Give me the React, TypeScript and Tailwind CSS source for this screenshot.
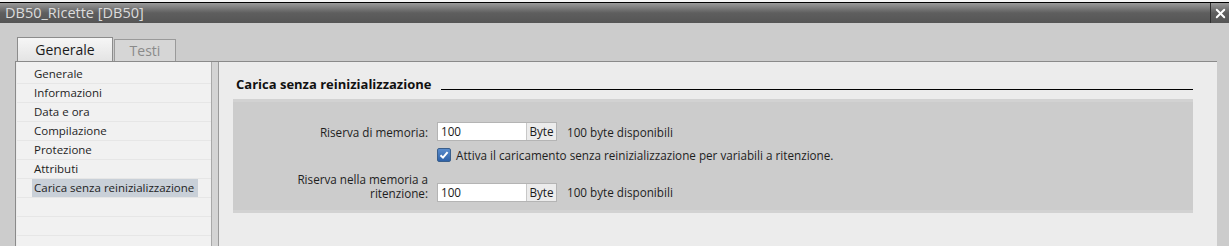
import { X } from "lucide-react"

const navItems = [
  "Generale",
  "Informazioni",
  "Data e ora",
  "Compilazione",
  "Protezione",
  "Attributi",
  "Carica senza reinizializzazione",
]

function ByteField({ value }: { value: string }) {
  return (
    <div className="flex h-[19px] w-[120px] border border-[#b4b4b4] bg-white text-[11.7px] leading-[17px] text-[#1a1a1a]">
      <span className="flex-1 pl-[3px]">{value}</span>
      <span className="w-[30px] border-l border-[#c8c8c8] bg-[#ececec] text-center">Byte</span>
    </div>
  )
}

export default function App() {
  return (
    <div
      className="flex h-[246px] w-[1229px] flex-col overflow-hidden bg-[#cccccc] text-[#1e1e1e]"
      style={{ fontFamily: '"Open Sans", "Noto Sans", sans-serif' }}
    >
      {/* strip of the window above */}
      <div className="h-[3px] shrink-0 border-b border-black bg-[#f4f4f4]" />

      {/* title bar */}
      <div className="flex h-[20px] shrink-0 items-center bg-gradient-to-b from-[#9a9a9a] via-[#5e5e5e] to-[#555555]">
        <span className="flex-1 pl-[5px] text-[14.5px] leading-[18px] text-[#dcdcdc]">DB50_Ricette [DB50]</span>
        <div className="flex h-full w-[19px] items-center justify-center border-l border-[#2e2e2e]">
          <X size={15} strokeWidth={3} className="text-white" />
        </div>
      </div>

      <div className="flex min-h-0 flex-1 flex-col pl-[15px] pr-[12px]">
        {/* tabs */}
        <div className="mt-[14px] flex h-[24px] shrink-0 items-end pl-[2px]">
          <div className="flex h-[24px] w-[96px] items-center justify-center border border-b-0 border-[#8c8c8c] bg-gradient-to-b from-[#f6f6f6] to-[#e4e4e4] text-[14px] font-medium text-[#1a1a1a]">
            Generale
          </div>
          <div className="ml-[1px] flex h-[22px] w-[62px] items-center justify-center border border-b-0 border-[#9a9a9a] bg-[#d6d6d6] text-[14px] font-medium text-[#8a8a8a]">
            Testi
          </div>
        </div>

        {/* panel */}
        <div className="flex min-h-0 flex-1 overflow-hidden border-l border-t border-[#8a8a8a] bg-[#ececec]">
          {/* left navigation */}
          <div className="ml-[1px] w-[195px] shrink-0 border-r border-[#a8a8a8] bg-[#f1f1f1] pt-[3px]">
            {navItems.map((item, i) => (
              <div key={item} className="border-b border-[#e6e6e6] pl-[15px]">
                <div
                  className={`h-[18px] w-[166px] pl-[2px] text-[11.5px] leading-[18px] ${
                    i === navItems.length - 1 ? "bg-[#c9d0d8]" : ""
                  }`}
                >
                  {item}
                </div>
              </div>
            ))}
            {[0, 1, 2].map((n) => (
              <div key={n} className="h-[19px] border-b border-[#e6e6e6]" />
            ))}
          </div>

          {/* splitter */}
          <div className="w-[7px] shrink-0 border-r border-[#9a9a9a] bg-[#d4d4d4]" />

          {/* content */}
          <div className="flex-1 pl-[14px] pr-[24px] pt-[13px]">
            <div className="flex items-center pl-[3px]">
              <span className="text-[13px] font-bold leading-[18px] text-[#111]">Carica senza reinizializzazione</span>
              <div className="ml-[10px] mt-[10px] h-px flex-1 bg-black" />
            </div>

            <div className="mt-[6px] h-[114px] border-y-[3px] border-[#d2d2d2] bg-[#cccccc] pt-[20px] text-[11.7px] leading-[16px]">
              <div className="flex items-center">
                <span className="w-[204px] pr-[9px] text-right">Riserva di memoria:</span>
                <ByteField value="100" />
                <span className="ml-[10px]">100 byte disponibili</span>
              </div>

              <div className="mt-[6px] flex items-center pl-[204px]">
                <div className="flex h-[14px] w-[14px] items-center justify-center rounded-[2px] border border-[#3a5f8c] bg-gradient-to-b from-[#5a8ccc] to-[#2e62a8]">
                  <svg width="10" height="10" viewBox="0 0 10 10">
                    <path d="M1.5 5.2 L4 7.6 L8.6 2.2" fill="none" stroke="white" strokeWidth="2" />
                  </svg>
                </div>
                <span className="ml-[5px]">Attiva il caricamento senza reinizializzazione per variabili a ritenzione.</span>
              </div>

              <div className="mt-[9px] flex items-end">
                <span className="w-[204px] pb-[2px] pr-[9px] text-right leading-[14px]">
                  Riserva nella memoria a
                  <br />
                  ritenzione:
                </span>
                <ByteField value="100" />
                <span className="ml-[10px] leading-[19px]">100 byte disponibili</span>
              </div>
            </div>
          </div>
        </div>
      </div>
    </div>
  )
}
